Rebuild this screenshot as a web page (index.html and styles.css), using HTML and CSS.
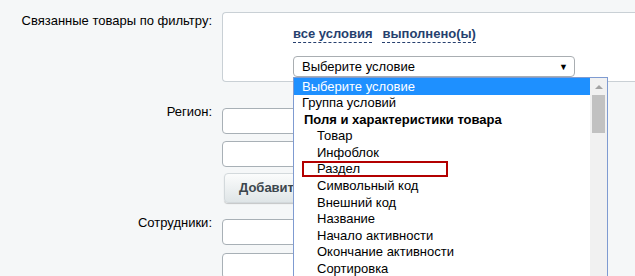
FILE: index.html
```html
<!DOCTYPE html>
<html lang="ru">
<head>
<meta charset="utf-8">
<title>Связанные товары</title>
<link rel="stylesheet" href="styles.css">
</head>
<body>
<div class="form">
  <div class="row row-filter">
    <div class="label label-top">Связанные товары по фильтру:</div>
    <div class="filter-box">
      <div class="links">
        <span class="dash-link">все условия</span>
        <span class="dash-link">выполнено(ы)</span>
      </div>
      <div class="select-wrap">
        <div class="select">
          <span class="select-text">Выберите условие</span>
          <span class="select-arrow">▼</span>
        </div>
        <div class="listbox">
          <div class="options">
            <div class="opt opt-selected">Выберите условие</div>
            <div class="opt">Группа условий</div>
            <div class="optgroup">Поля и характеристики товара</div>
            <div class="opt opt-child">Товар</div>
            <div class="opt opt-child">Инфоблок</div>
            <div class="opt opt-child">Раздел</div>
            <div class="opt opt-child">Символьный код</div>
            <div class="opt opt-child">Внешний код</div>
            <div class="opt opt-child">Название</div>
            <div class="opt opt-child">Начало активности</div>
            <div class="opt opt-child">Окончание активности</div>
            <div class="opt opt-child">Сортировка</div>
          </div>
          <div class="scrollbar">
            <div class="scroll-up"></div>
            <div class="scroll-thumb"></div>
          </div>
          <div class="highlight-mark"></div>
        </div>
      </div>
    </div>
  </div>

  <div class="row row-region">
    <div class="label label-field">Регион:</div>
    <div class="fields">
      <div class="input"></div>
      <div class="input input-second"></div>
      <div class="button">Добавить</div>
    </div>
  </div>

  <div class="row row-staff">
    <div class="label label-field">Сотрудники:</div>
    <div class="fields">
      <div class="input"></div>
      <div class="input input-third"></div>
    </div>
  </div>
</div>
</body>
</html>
```

FILE: styles.css
```css
html, body {
  margin: 0;
  padding: 0;
}

body {
  background: #f5f7f8;
  font-family: "Liberation Sans", Arial, sans-serif;
  font-size: 13px;
  color: #000;
}

.form {
  padding-top: 12px;
  height: 276px;
  box-sizing: border-box;
  overflow: hidden;
}

.row {
  display: grid;
  grid-template-columns: 212px 1fr;
  column-gap: 10px;
}

.label {
  text-align: right;
  line-height: 16px;
  color: #000;
}

.label-top {
  padding-top: 1px;
}

.label-field {
  margin-top: -4px;
}

.filter-box {
  position: relative;
  z-index: 2;
  background: #fff;
  border: 1px solid #c9d0d5;
  border-right: none;
  border-radius: 4px 0 0 4px;
  padding-left: 70px;
  padding-top: 13px;
  box-sizing: border-box;
  height: 70px;
}

.links {
  display: flex;
  gap: 10px;
  line-height: 16px;
}

.dash-link {
  font-weight: bold;
  color: #263f6e;
  border-bottom: 1px dashed #263f6e;
}

.select-wrap {
  position: relative;
  margin-top: 13px;
  width: 282px;
}

.select {
  height: 21px;
  box-sizing: border-box;
  border: 1px solid #a9aeb2;
  border-radius: 4px;
  background: #fff;
  display: flex;
  align-items: center;
  justify-content: space-between;
  padding: 0 6px 0 8px;
}

.select-text {
  line-height: 16px;
}

.select-arrow {
  font-size: 9px;
  color: #000;
}

.listbox {
  position: absolute;
  left: 0;
  top: 21px;
  width: 315px;
  height: 202px;
  box-sizing: border-box;
  border: 1px solid #7f9bd1;
  border-bottom: none;
  background: #fff;
  display: flex;
  overflow: hidden;
}

.options {
  flex: 1;
}

.opt, .optgroup {
  height: 16.6px;
  line-height: 16.6px;
  padding-left: 8px;
  white-space: nowrap;
}

.opt-selected {
  background: #1e90ff;
  color: #fff;
  height: 17px;
  line-height: 17px;
}

.optgroup {
  font-weight: bold;
  padding-left: 10px;
}

.opt-child {
  padding-left: 23px;
}

.scrollbar {
  width: 17px;
  background: #f1f1f1;
  display: flex;
  flex-direction: column;
  align-items: center;
}

.scroll-up {
  width: 0;
  height: 0;
  margin-top: 7px;
  border-left: 4px solid transparent;
  border-right: 4px solid transparent;
  border-bottom: 4px solid #a3a3a3;
}

.scroll-thumb {
  width: 13px;
  height: 38px;
  margin-top: 6px;
  background: #c1c1c1;
}

.highlight-mark {
  position: absolute;
  left: 8px;
  top: 83px;
  width: 146px;
  height: 16px;
  box-sizing: border-box;
  border: 2px solid #b30000;
}

.row-region {
  margin-top: 26px;
}

.row-staff {
  margin-top: 16px;
}

.fields {
  display: flex;
  flex-direction: column;
  align-items: flex-start;
}

.input {
  width: 300px;
  height: 26px;
  box-sizing: border-box;
  background: #fff;
  border: 1px solid #a8b0b6;
  border-radius: 4px;
}

.input-second {
  margin-top: 7px;
}

.input-third {
  margin-top: 8px;
}

.button {
  margin-top: 6px;
  margin-left: 2px;
  height: 30px;
  box-sizing: border-box;
  padding: 0 14px;
  line-height: 28px;
  font-weight: bold;
  color: #3c464d;
  background: linear-gradient(#fbfcfc, #dfe5e7);
  border: 1px solid #d3d9dc;
  border-radius: 4px;
  box-shadow: 0 1px 1px rgba(0, 0, 0, 0.2);
}
```
